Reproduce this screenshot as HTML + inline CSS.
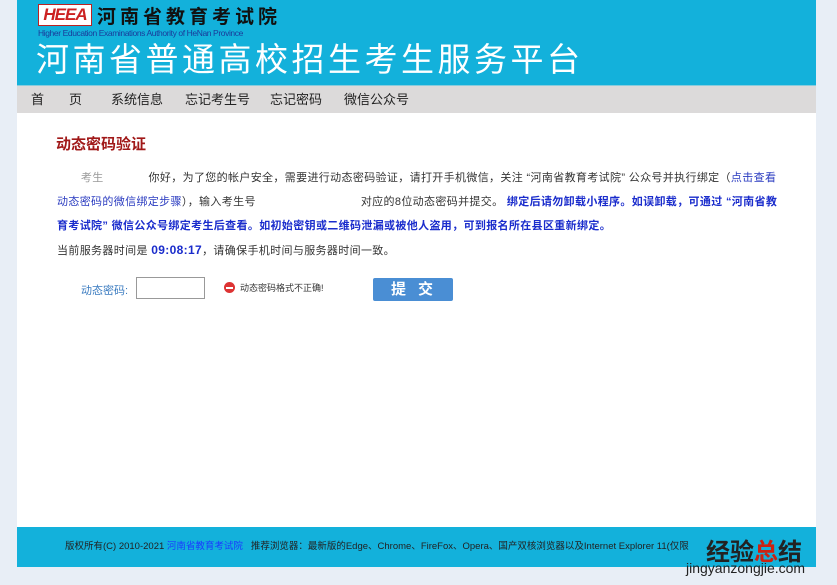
<!DOCTYPE html>
<html><head><meta charset="utf-8"><style>
*{margin:0;padding:0;box-sizing:border-box}
body{width:837px;height:585px;background:#e8eef6;font-family:"Liberation Sans","Noto Sans CJK SC",sans-serif;position:relative;overflow:hidden}
.wrap{position:absolute;left:17px;top:0;width:799px}
.hd{height:85px;background:#13b1db;position:relative;color:#fff}
.logo{position:absolute;left:21px;top:4px;width:54px;height:22px;background:#fff;border:1px solid #b22;color:#c22;font:bold italic 17px/20px "Liberation Sans",sans-serif;text-align:center;letter-spacing:-1px}
.t1{position:absolute;left:80px;top:2px;font-size:19px;font-weight:bold;color:#111;letter-spacing:4px;font-family:"Liberation Sans","Noto Sans CJK SC",sans-serif}
.t2{position:absolute;left:21px;top:28px;font-size:8.5px;color:#1a3b9a;letter-spacing:-0.4px}
.t3{position:absolute;left:19px;top:37px;font-size:33px;line-height:46px;letter-spacing:3.5px;color:#fff}
.nav{height:28px;background:#dcdada;border-top:1px solid #8cd;font-size:13px;color:#222;line-height:27px;position:relative}
.nav span{position:absolute;top:0}
.main{height:414px;background:#fff;position:relative;font-size:11px;color:#333}
.ttl{position:absolute;left:39px;top:20px;color:#a01818;font-weight:bold;font-size:15px}
.p{position:absolute;left:40px;width:722px;line-height:24px;top:53px;letter-spacing:0.35px}
.b{color:#1a2ccc;font-weight:bold}
.l{color:#2a3bc0}
.ft{height:40px;background:#13b1db;font-size:9.5px;color:#222;line-height:40px;padding-left:48px}
</style></head><body>
<div class="wrap">
<div class="hd">
<div class="logo">HEEA</div>
<div class="t1">河南省教育考试院</div>
<div class="t2">Higher Education Examinations Authority of HeNan Province</div>
<div class="t3">河南省普通高校招生考生服务平台</div>
</div>
<div class="nav"><span style="left:14px">首</span><span style="left:52px">页</span><span style="left:94px">系统信息</span><span style="left:168px">忘记考生号</span><span style="left:253px">忘记密码</span><span style="left:327px">微信公众号</span></div>
<div class="main">
<div class="ttl">动态密码验证</div>
<div class="p">&nbsp;&nbsp;&nbsp;&nbsp;&nbsp;&nbsp;&nbsp;<span style="color:#999">考生</span><span style="display:inline-block;width:45px"></span>你好，为了您的帐户安全，需要进行动态密码验证，请打开手机微信，关注 “河南省教育考试院” 公众号并执行绑定（<span class="l">点击查看动态密码的微信绑定步骤</span>），输入考生号<span style="display:inline-block;width:105px"></span>对应的8位动态密码并提交。 <span class="b">绑定后请勿卸载小程序。如误卸载，可通过 “河南省教育考试院” 微信公众号绑定考生后查看。如初始密钥或二维码泄漏或被他人盗用，可到报名所在县区重新绑定。</span><br>当前服务器时间是 <span class="b" style="font-size:12px">09:08:17</span>，请确保手机时间与服务器时间一致。</div>
<div style="position:absolute;left:64px;top:169px;color:#3a7bc0">动态密码:</div>
<div style="position:absolute;left:119px;top:164px;width:69px;height:22px;border:1px solid #999"></div>
<div style="position:absolute;left:207px;top:169px;width:11px;height:11px;border-radius:50%;background:#d33"><div style="margin:5px 2px;height:2px;background:#fff"></div></div>
<div style="position:absolute;left:223px;top:168px;font-size:9px;color:#333">动态密码格式不正确!</div>
<div style="position:absolute;left:356px;top:165px;width:80px;height:23px;background:#4a8ed4;color:#fff;font-size:15px;font-weight:bold;text-align:center;line-height:23px;letter-spacing:12px;padding-left:10px;border-radius:2px">提交</div>
</div>
<div class="ft">版权所有(C) 2010-2021 <span style="color:#1a3bff">河南省教育考试院</span>&nbsp;&nbsp; 推荐浏览器：最新版的Edge、Chrome、FireFox、Opera、国产双核浏览器以及Internet Explorer 11(仅限</div>
</div>
<div style="position:absolute;left:706px;top:532px;font-size:24px;font-weight:bold;color:#222">经验<span style="color:#c21">总</span>结</div>
<div style="position:absolute;left:686px;top:560px;font-size:14px;color:#222">jingyanzongjie.com</div>
</body></html>
